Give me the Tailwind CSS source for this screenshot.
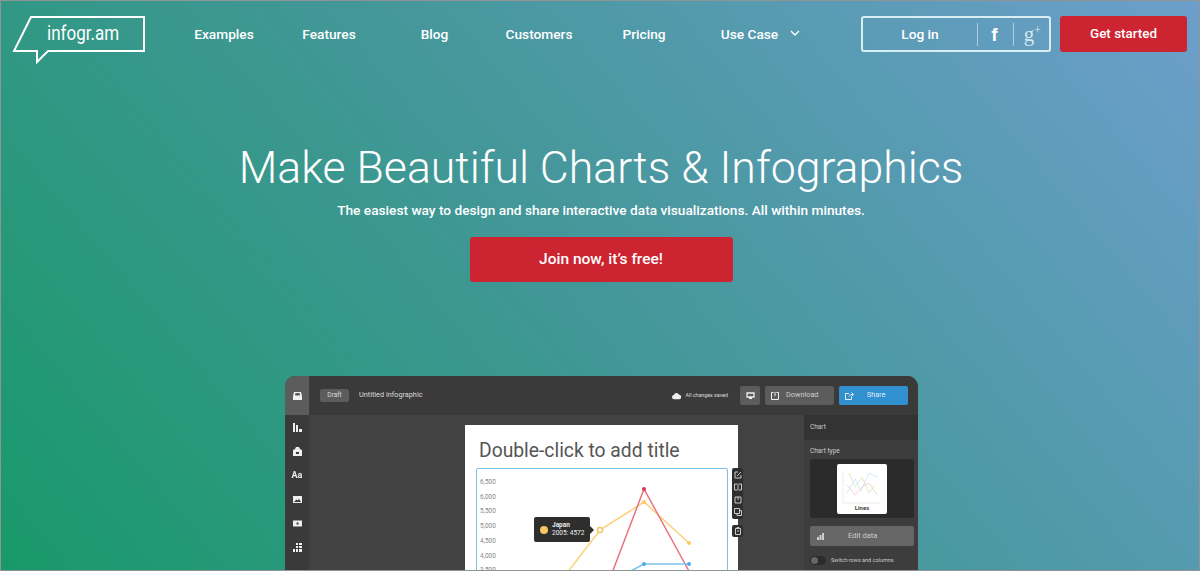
<!DOCTYPE html>
<html lang="en">
<head>
  <meta charset="UTF-8" />
  <title>Infogr.am</title>
  <script src="https://cdn.jsdelivr.net/npm/@tailwindcss/browser@4"></script>
</head>
<body class="m-0">
<div class="box-border h-[571px] w-[1200px] overflow-hidden border border-[#8f9497] bg-[linear-gradient(50deg,#18996a,#449799_50%,#6c9fcb)] font-['Roboto',sans-serif] text-white">

  <!-- Header -->
  <header class="flex h-[65px] items-start pl-[11px] pt-[15px]">
    <a class="relative block h-[50px] w-[134px] shrink-0">
      <svg class="h-[50px] w-[134px]" viewBox="0 0 134 50" fill="none" stroke="#fff" stroke-width="2"><path d="M19 1H132V35H36L25 46V35H2Z"/></svg>
      <span class="absolute left-[35px] top-[5px] origin-left scale-x-[0.85] text-[20px] leading-[24px] font-normal">infogr.am</span>
    </a>
    <nav class="ml-[26px] flex h-[36px] items-center text-[13.7px] font-medium">
      <a class="w-[105px] pr-[1px] text-center">Examples</a>
      <a class="w-[105px] pr-[1px] text-center">Features</a>
      <a class="w-[105px] text-center">Blog</a>
      <a class="w-[105px] pr-[1px] text-center">Customers</a>
      <a class="w-[105px] pr-[1px] text-center">Pricing</a>
      <a class="relative w-[105px] text-center">Use Case
        <svg class="absolute left-[93px] top-[6px] h-[7px] w-[10px]" viewBox="0 0 10 7" fill="none" stroke="#fff" stroke-width="1.4"><path d="M1 1l4 4 4-4"/></svg>
      </a>
    </nav>
    <div class="ml-[59px] flex h-[36px] w-[190px] items-center rounded-[3px] border-2 border-[#d8eef2]">
      <span class="w-[114px] text-center text-[13.7px] font-medium">Log in</span>
      <span class="h-[23px] w-px bg-white/50"></span>
      <span class="flex w-[35px] justify-center pr-[2px] font-['Liberation_Sans',sans-serif] text-[19px] leading-none font-bold">f</span>
      <span class="h-[23px] w-px bg-white/50"></span>
      <span class="flex flex-1 items-start justify-center pl-[2px] font-['Liberation_Serif',serif] text-[21px] leading-none text-white/75">g<span class="text-[12px]">+</span></span>
    </div>
    <a class="ml-[9px] flex h-[36px] w-[127px] items-center justify-center rounded-[3px] bg-[#cc2431] text-[13.400px] font-medium">Get started</a>
  </header>

  <!-- Hero -->
  <section class="flex flex-col items-center pl-[2px]">
    <h1 class="mt-[73px] text-[44.6px] leading-[58px] font-light">Make Beautiful Charts &amp; Infographics</h1>
    <p class="mt-[3px] text-[13.7px] leading-[20px] font-medium">The easiest way to design and share interactive data visualizations. All within minutes.</p>
    <a class="mt-[17px] flex h-[45px] w-[263px] items-center justify-center rounded-[3px] bg-[#cc2431] text-[15.500px] font-medium">Join now, it’s free!</a>
  </section>

  <!-- App preview -->
  <div class="ml-[284px] mt-[94px] flex h-[200px] w-[633px] flex-col overflow-hidden rounded-t-[11px] bg-[#424242] blur-[0.5px]">
    <div class="flex h-[39px] shrink-0 items-center bg-[#3a3a3a] pr-[10px]">
      <div class="flex h-[39px] w-[24px] items-center justify-center bg-[#5c5c5c]">
        <svg class="h-[8px] w-[9px]" viewBox="0 0 9 8" fill="#f0f0f0"><path d="M1 0h7l1 4v4H0V4zM2 3.500h5L6.600 1H2.400z" fill-rule="evenodd"/></svg>
      </div>
      <span class="ml-[11px] flex h-[13px] w-[29px] items-center justify-center rounded-[2px] bg-[#5c5c5c] text-[6.500px] text-[#ddd]">Draft</span>
      <span class="ml-[10px] text-[7.300px] text-[#ddd]">Untitled infographic</span>
      <svg class="ml-auto h-[8px] w-[9px]" viewBox="0 0 10 7" fill="#eee"><path d="M2.500 7a2.300 2.300 0 0 1-.4-4.600A3 3 0 0 1 7.800 2.200 2.400 2.400 0 0 1 7.700 7z"/></svg>
      <span class="ml-[4px] text-[5.300px] text-[#ddd]">All changes saved</span>
      <span class="ml-[12px] flex h-[19px] w-[20px] items-center justify-center rounded-[2px] bg-[#5c5c5c]">
        <svg class="h-[7px] w-[9px]" viewBox="0 0 9 7" fill="none" stroke="#eee" stroke-width="1.300"><path d="M1 1h7v4H1zM3 6.500h3"/></svg>
      </span>
      <span class="ml-[5px] flex h-[19px] w-[69px] items-center rounded-[2px] bg-[#5c5c5c] pl-[6px] text-[7.300px] text-[#ccc]">
        <svg class="h-[8px] w-[8px]" viewBox="0 0 8 8" fill="none" stroke="#eee"><path d="M2.500.5H.5v7h7v-7h-2M4 0v4"/></svg>
        <span class="ml-[7px]">Download</span>
      </span>
      <span class="ml-[5px] flex h-[19px] w-[69px] items-center rounded-[2px] bg-[#3090d0] pl-[6px] text-[7.300px] text-[#e4f2fb]">
        <svg class="h-[8px] w-[9px]" viewBox="0 0 9 8" fill="none" stroke="#eee"><path d="M4 1.500H.5v6h6V5M4 4.500C4.500 3 5.500 2.500 8 2.500M6.500 .5l2 2-2 2"/></svg>
        <span class="ml-[13px]">Share</span>
      </span>
    </div>

    <div class="flex min-h-0 flex-1">
      <div class="flex w-[24px] shrink-0 flex-col items-center gap-[15px] bg-[#3a3a3a] pt-[8px]">
        <svg class="h-[9px] w-[9px]" viewBox="0 0 9 9" fill="#eee"><path d="M0 0h2v9H0zM3 2h2v7H3zM6 6h3v3H6z"/></svg>
        <svg class="h-[9px] w-[9px]" viewBox="0 0 9 9" fill="#eee"><path d="M0 3l2-1 1-2h3l1 2 2 1v6H0zM3 5v2h3V5z" fill-rule="evenodd"/></svg>
        <span class="flex h-[9px] items-center text-[9px] font-bold text-[#eee]">Aa</span>
        <svg class="h-[9px] w-[9px]" viewBox="0 0 9 9" fill="#eee"><path d="M0 1h9v7H0zM1 7h7L6 4 4.500 5.500 3.500 4.500z" fill-rule="evenodd"/></svg>
        <svg class="h-[9px] w-[9px]" viewBox="0 0 9 9" fill="#eee"><path d="M0 1.500h9v6H0zM3.500 3.500v2h2v-2z" fill-rule="evenodd"/></svg>
        <svg class="h-[9px] w-[9px]" viewBox="0 0 9 9" fill="#eee"><path d="M3 0h2v2H3zM6 0h3v2H6zM3 3h2v2H3zM6 3h3v2H6zM0 6h2v3H0zM3 6h2v3H3zM6 6h3v3H6z"/></svg>
      </div>

      <!-- Canvas -->
      <div class="flex min-w-0 flex-1 pl-[156px] pt-[10px]">
        <div class="relative h-[200px] w-[273px] shrink-0 bg-white px-[11px]">
          <h2 class="ml-[3px] pt-[14px] text-[19.300px] leading-[24px] text-[#555]">Double-click to add title</h2>
          <div class="relative mt-[5px] h-[120px] w-[252px] rounded-[2px] border-[1.5px] border-[#7cc0ea] pl-[3px] pt-[6px]">
            <ul class="flex flex-col text-[6.500px] leading-[14.700px] text-[#888]">
              <li>6,500</li><li>6,000</li><li>5,500</li><li>5,000</li><li>4,500</li><li>4,000</li><li>3,500</li>
            </ul>
            <!-- chart overlay, coordinates are the frame's -->
            <svg class="absolute left-0 top-0 h-[120px] w-[250px]" viewBox="0 0 250 120" fill="none" stroke-width="1.500">
              <path d="M90 104L123 61 167 33 212 74" stroke="#fbd37a"/>
              <path d="M135 104L167 20 213 104" stroke="#e9707f"/>
              <path d="M150 104L167 95H212" stroke="#7cc4ec"/>
              <circle cx="167" cy="20" r="2" fill="#d9384a"/>
              <circle cx="167" cy="33" r="2" fill="#fbc860"/>
              <circle cx="212" cy="74" r="2" fill="#fbc860"/>
              <circle cx="167" cy="95" r="2" fill="#4aaee6"/>
              <circle cx="212" cy="95" r="2" fill="#4aaee6"/>
              <circle cx="123" cy="61" r="2.600" fill="#fff" stroke="#f5c566"/>
            </svg>
            <div class="absolute left-[57px] top-[48px] flex h-[25px] w-[56px] items-center gap-[4px] rounded-[2px] bg-[#2e2e2e] pl-[6px] text-[6.500px] leading-[7.500px] text-[#eee]">
              <span class="size-[8px] rounded-full bg-[#f8c75f]"></span>
              <span><b class="block">Japan</b>2005: 4572</span>
              <span class="absolute left-[56px] top-[9px] size-0 border-y-[4px] border-l-[4px] border-y-transparent border-l-[#2e2e2e]"></span>
            </div>
          </div>
          <!-- floating tools -->
          <div class="absolute left-[267px] top-[43px] flex h-[51px] w-[11px] flex-col items-center justify-between rounded-[2px] bg-[#2e2e2e] py-[3px]">
            <svg class="size-[8px]" viewBox="0 0 8 8" fill="none" stroke="#ddd" stroke-width="0.900"><path d="M4 1H1v6h6V4M3 5l4-4"/></svg>
            <svg class="size-[8px]" viewBox="0 0 8 8" fill="none" stroke="#ddd" stroke-width="0.900"><path d="M4 .5v7M3 1H.5v6H3M5 1h2.500v6H5"/></svg>
            <svg class="size-[8px]" viewBox="0 0 8 8" fill="none" stroke="#ddd" stroke-width="0.900"><path d="M1 1h6v6H1zM4 1v3"/></svg>
            <svg class="size-[8px]" viewBox="0 0 8 8" fill="none" stroke="#ddd" stroke-width="0.900"><path d="M.5.5h5v5h-5zM3 5.500v2h4.500v-5h-2"/></svg>
          </div>
          <div class="absolute left-[267px] top-[100px] flex h-[12px] w-[11px] items-center justify-center rounded-[2px] bg-[#2e2e2e]">
            <svg class="size-[8px]" viewBox="0 0 8 8" fill="none" stroke="#ddd" stroke-width="0.900"><path d="M1.500 1.500h5v6h-5zM3 1.500V.5h2v1M3 4h2"/></svg>
          </div>
        </div>
      </div>

      <!-- Right panel -->
      <aside class="w-[114px] shrink-0 bg-[#3d3d3d] text-[#ccc]">
        <div class="flex h-[25px] items-center bg-[#333] pl-[6px] text-[6.500px]">Chart</div>
        <div class="pl-[6px] pr-[4px]">
          <p class="mt-[7px] text-[6.500px] leading-[9px]">Chart type</p>
          <div class="mt-[3px] flex h-[59px] items-center justify-center rounded-[2px] bg-[#2b2b2b]">
            <div class="flex h-[50px] w-[50px] flex-col items-center rounded-[2px] bg-white">
              <svg class="mt-[5px] h-[35px] w-[42px]" viewBox="0 0 42 35" fill="none" stroke-width="0.600">
                <path d="M2 2V34H40" stroke="#ddd"/>
                <path d="M8 4L14 18 21 8 28 24 34 16" stroke="#cfe0a0"/>
                <path d="M6 24L14 10 20 22 28 4 36 8" stroke="#bcdcf4"/>
                <path d="M6 16L14 26 21 18 28 14 36 26" stroke="#f4b8be"/>
              </svg>
              <span class="text-[6px] leading-[8px] font-bold text-[#444]">Lines</span>
            </div>
          </div>
          <div class="mt-[8px] flex h-[20px] items-center rounded-[2px] bg-[#666] pl-[7px] text-[7.500px]">
            <svg class="h-[7px] w-[7px]" viewBox="0 0 7 7" fill="#ccc"><path d="M5 0h2v7H5zM2.500 2h2v5h-2zM0 4h2v3H0z"/></svg>
            <span class="ml-[24px]">Edit data</span>
          </div>
          <div class="mt-[10px] flex items-center gap-[5px] text-[5.500px]">
            <span class="flex h-[9px] w-[16px] items-center rounded-full bg-[#2b2b2b] pl-[1px]"><span class="size-[7px] rounded-full bg-[#666]"></span></span>
            Switch rows and columns
          </div>
        </div>
      </aside>
    </div>
  </div>
</div>
</body>
</html>
